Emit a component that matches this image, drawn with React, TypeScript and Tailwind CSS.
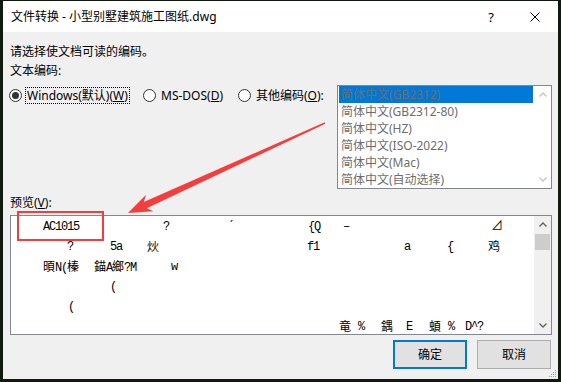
import React from 'react';

type Token = [number, string];

const encodings = [
  '简体中文(GB2312)',
  '简体中文(GB2312-80)',
  '简体中文(HZ)',
  '简体中文(ISO-2022)',
  '简体中文(Mac)',
  '简体中文(自动选择)',
];

// x positions are page coordinates of each token's left edge
const previewRows: Token[][] = [
  [[43, 'AC1015'], [163, '?'], [228, 'ˊ'], [308, '{Q'], [343, '–'], [491, '⊿']],
  [[67, '?'], [110, '5a'], [147, '炏'], [307, 'f1'], [404, 'a'], [447, '{'], [488, '鸡']],
  [[43, '暊N(榛'], [94, '錨A鄉?M'], [171, 'w']],
  [[110, '(']],
  [[68, '(']],
  [[339, '竜'], [358, '%'], [381, '鍝'], [406, 'E'], [429, '蝢'], [448, '%'], [465, 'D^?']],
];

const Glyphs = ({ text }: { text: string }) => (
  <>
    {Array.from(text).map((c, i) =>
      c.charCodeAt(0) > 0x2e80 ? (
        <span key={i} className="text-[12px] tracking-normal font-['Noto_Sans_CJK_SC',sans-serif]">
          {c}
        </span>
      ) : (
        <span key={i}>{c}</span>
      )
    )}
  </>
);

const Radio = ({ checked }: { checked?: boolean }) => (
  <div className="w-[13px] h-[13px] shrink-0 rounded-full border border-[#333333] bg-white flex items-center justify-center">
    {checked && <div className="w-[7px] h-[7px] rounded-full bg-[#333333]" />}
  </div>
);

const Chevron = ({ up, color }: { up?: boolean; color: string }) => (
  <svg width="8" height="5" viewBox="0 0 8 5">
    <polyline
      points={up ? '0.5,4.5 4,1 7.5,4.5' : '0.5,0.5 4,4 7.5,0.5'}
      fill="none"
      stroke={color}
      strokeWidth="1.3"
    />
  </svg>
);

export default function App() {
  return (
    <div className="relative w-[561px] h-[382px] font-['Noto_Sans','Noto_Sans_CJK_SC',sans-serif] text-[12px] text-black">
      <div className="w-full h-full flex flex-col bg-[#f0f0f0] border-t border-x-[3px] border-b-[3px] border-[#0e1a0e]">
        {/* title bar */}
        <div className="h-[31px] shrink-0 bg-white flex items-center pl-[8px] pr-[18px]">
          <span className="leading-[16px]">文件转换 - 小型别墅建筑施工图纸.dwg</span>
          <span className="ml-auto text-[13px] leading-[16px]">?</span>
          <svg className="ml-[36px]" width="10" height="10" viewBox="0 0 10 10">
            <path d="M0.5 0.5 L9.5 9.5 M9.5 0.5 L0.5 9.5" stroke="#000" strokeWidth="1" />
          </svg>
        </div>

        <div className="flex flex-col pl-[7px] pr-[6px]">
          <div className="mt-[12px] leading-[16px]">请选择使文档可读的编码。</div>
          <div className="mt-[3px] leading-[16px]">文本编码:</div>

          <div className="mt-[6px] flex items-start">
            <div className="flex-1 mt-[2px] flex items-center h-[17px]">
              <div className="w-[134px] ml-[-1px] flex items-center">
                <Radio checked />
                <span className="ml-[3px] h-[17px] px-[1px] border border-dotted border-black leading-[15px] whitespace-nowrap">
                  Windows(默认)(<span className="underline">W</span>)
                </span>
              </div>
              <div className="w-[95px] flex items-center">
                <Radio />
                <span className="ml-[5px] leading-[16px] whitespace-nowrap">
                  MS-DOS(<span className="underline">D</span>)
                </span>
              </div>
              <div className="flex items-center">
                <Radio />
                <span className="ml-[5px] leading-[16px] whitespace-nowrap">
                  其他编码(<span className="underline">O</span>):
                </span>
              </div>
            </div>

            <div className="w-[215px] h-[104px] border border-[#828790] bg-white flex">
              <div className="flex-1 pl-[1px] pr-[1px]">
                {encodings.map((e, i) => (
                  <div
                    key={e}
                    className={`h-[17px] pl-[2px] leading-[17px] text-[#6d6d6d] whitespace-nowrap ${
                      i === 0 ? 'bg-[#0078d7]' : ''
                    }`}
                  >
                    {e}
                  </div>
                ))}
              </div>
              <div className="w-[17px] flex flex-col items-center justify-between py-[6px]">
                <Chevron up color="#c4c4c4" />
                <Chevron color="#c4c4c4" />
              </div>
            </div>
          </div>

          <div className="mt-[6px] leading-[16px]">
            预览(<span className="underline">V</span>):
          </div>

          <div className="mt-[4px] h-[120px] border border-[#828790] bg-white flex">
            <div className="flex-1 pt-[1px] overflow-hidden font-['Liberation_Mono','Noto_Sans_CJK_SC',monospace] text-[12px] tracking-[-1.2px]">
              {previewRows.map((row, r) => (
                <div key={r} className="flex h-[20px] items-center whitespace-nowrap">
                  <div className="shrink-0" style={{ width: row[0][0] - 11 }} />
                  {row.map(([x, t], i) => (
                    <span
                      key={i}
                      className="shrink-0"
                      style={i < row.length - 1 ? { width: row[i + 1][0] - x } : undefined}
                    >
                      <Glyphs text={t} />
                    </span>
                  ))}
                </div>
              ))}
            </div>
            <div className="w-[17px] bg-[#f0f0f0] flex flex-col">
              <div className="h-[17px] flex items-center justify-center">
                <Chevron up color="#606060" />
              </div>
              <div className="mt-[1px] mx-[1px] h-[16px] bg-[#cdcdcd]" />
              <div className="mt-auto h-[17px] flex items-center justify-center">
                <Chevron color="#606060" />
              </div>
            </div>
          </div>

          <div className="mt-[5px] flex justify-end gap-[10px] pr-[1px]">
            <button className="w-[74px] h-[29px] bg-[#e1e1e1] border-2 border-[#0078d7] leading-[16px]">
              确定
            </button>
            <button className="w-[74px] h-[29px] bg-[#e1e1e1] border border-[#adadad] leading-[16px]">
              取消
            </button>
          </div>
        </div>
      </div>

      {/* annotation overlay + size grip */}
      <svg className="absolute left-0 top-0 pointer-events-none" width="561" height="382" viewBox="0 0 561 382">
        <rect x="18" y="212" width="85" height="28" fill="none" stroke="#f43e3e" strokeWidth="2" />
        <polygon
          points="128,213 153.5,211.2 146.8,208.3 325.3,123.7 324.7,122.3 143.8,201.9 146.1,194.8"
          fill="#f43e3e"
        />
        <g fill="#a0a0a0">
          <rect x="555" y="370" width="1" height="1" />
          <rect x="553" y="372" width="1" height="1" />
          <rect x="555" y="372" width="1" height="1" />
          <rect x="551" y="374" width="1" height="1" />
          <rect x="553" y="374" width="1" height="1" />
          <rect x="555" y="374" width="1" height="1" />
          <rect x="549" y="376" width="1" height="1" />
          <rect x="551" y="376" width="1" height="1" />
          <rect x="553" y="376" width="1" height="1" />
          <rect x="555" y="376" width="1" height="1" />
        </g>
      </svg>
    </div>
  );
}
